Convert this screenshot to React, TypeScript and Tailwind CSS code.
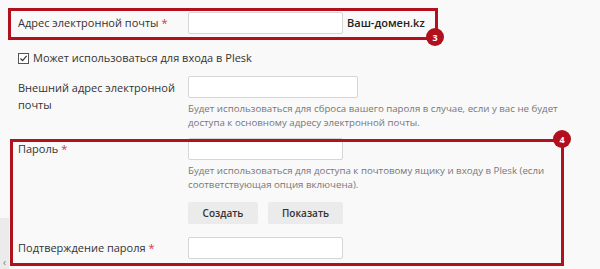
import React from "react";

const font = { fontFamily: '"Open Sans", "Noto Sans", sans-serif' };

function Req() {
  return <span className="text-[#d0363f] ml-[3px]">*</span>;
}

function Input({ w }: { w: string }) {
  return <div className={`h-[22px] ${w} bg-white border border-[#d6d6d6] rounded-[2px]`} />;
}

function Badge({ n }: { n: string }) {
  return (
    <div className="w-[18px] h-[18px] rounded-full bg-[#b3101e] text-white text-[9px] font-bold flex items-center justify-center leading-none">
      {n}
    </div>
  );
}

export default function App() {
  return (
    <div className="relative w-[600px] h-[269px] bg-[#f9f9f9] overflow-hidden text-[#333] whitespace-nowrap" style={font}>
      {/* form */}
      <div className="pl-[18px] pt-[12px] text-[11px]">
        {/* row 1 */}
        <div className="flex items-center h-[22px]">
          <div className="w-[170px] leading-[22px]">
            Адрес электронной почты<Req />
          </div>
          <Input w="w-[155px]" />
          <span className="ml-[4px] text-[11px] font-semibold text-[#222]">Ваш-домен.kz</span>
        </div>
        {/* checkbox */}
        <div className="flex items-center mt-[17px] h-[14px]">
          <div className="w-[11px] h-[11px] border border-[#555] bg-white flex items-center justify-center">
            <svg width="9" height="9" viewBox="0 0 9 9">
              <path d="M1.5 4.5 L3.6 6.6 L7.6 1.8" stroke="#333" strokeWidth="1.2" fill="none" />
            </svg>
          </div>
          <span className="ml-[4px]">Может использоваться для входа в Plesk</span>
        </div>
        {/* external */}
        <div className="flex mt-[11px]">
          <div className="w-[170px] pt-[3px] leading-[17px]">
            Внешний адрес электронной
            <br />
            почты
          </div>
          <div>
            <Input w="w-[170px]" />
            <div className="mt-[4px] text-[9.7px] leading-[14px] text-[#777]">
              Будет использоваться для сброса вашего пароля в случае, если у вас не будет
              <br />
              доступа к основному адресу электронной почты.
            </div>
          </div>
        </div>
        {/* password */}
        <div className="flex mt-[8px]">
          <div className="w-[170px] leading-[22px]">
            Пароль<Req />
          </div>
          <div>
            <Input w="w-[155px]" />
            <div className="mt-[4px] text-[9.7px] leading-[14px] text-[#777]">
              Будет использоваться для доступа к почтовому ящику и входу в Plesk (если
              <br />
              соответствующая опция включена).
            </div>
            <div className="flex gap-[10px] mt-[10px]">
              <button className="h-[22px] w-[70px] bg-[#ebebeb] rounded-[2px] text-[10px] text-[#333] font-semibold">
                Создать
              </button>
              <button className="h-[22px] w-[75px] bg-[#ebebeb] rounded-[2px] text-[10px] text-[#333] font-semibold">
                Показать
              </button>
            </div>
          </div>
        </div>
        {/* confirm */}
        <div className="flex mt-[13px]">
          <div className="w-[170px] leading-[22px]">
            Подтверждение пароля<Req />
          </div>
          <Input w="w-[155px]" />
        </div>
      </div>

      {/* left strip */}
      <div className="absolute left-0 top-[218px] w-[9px] h-[51px] bg-[#ebebeb] flex items-end justify-center pb-[2px]">
        <span className="text-[10px] text-[#777] leading-none">‹</span>
      </div>

      {/* annotation 3 */}
      <div className="absolute left-[8px] top-[8px] w-[430px] h-[32px] border-[3px] border-[#b3101e]" />
      <div className="absolute left-[426px] top-[28px]">
        <Badge n="3" />
      </div>

      {/* annotation 4 */}
      <div className="absolute left-[10px] top-[139px] w-[554px] h-[127px] border-[3px] border-[#b3101e]" />
      <div className="absolute left-[553px] top-[130px]">
        <Badge n="4" />
      </div>
    </div>
  );
}
